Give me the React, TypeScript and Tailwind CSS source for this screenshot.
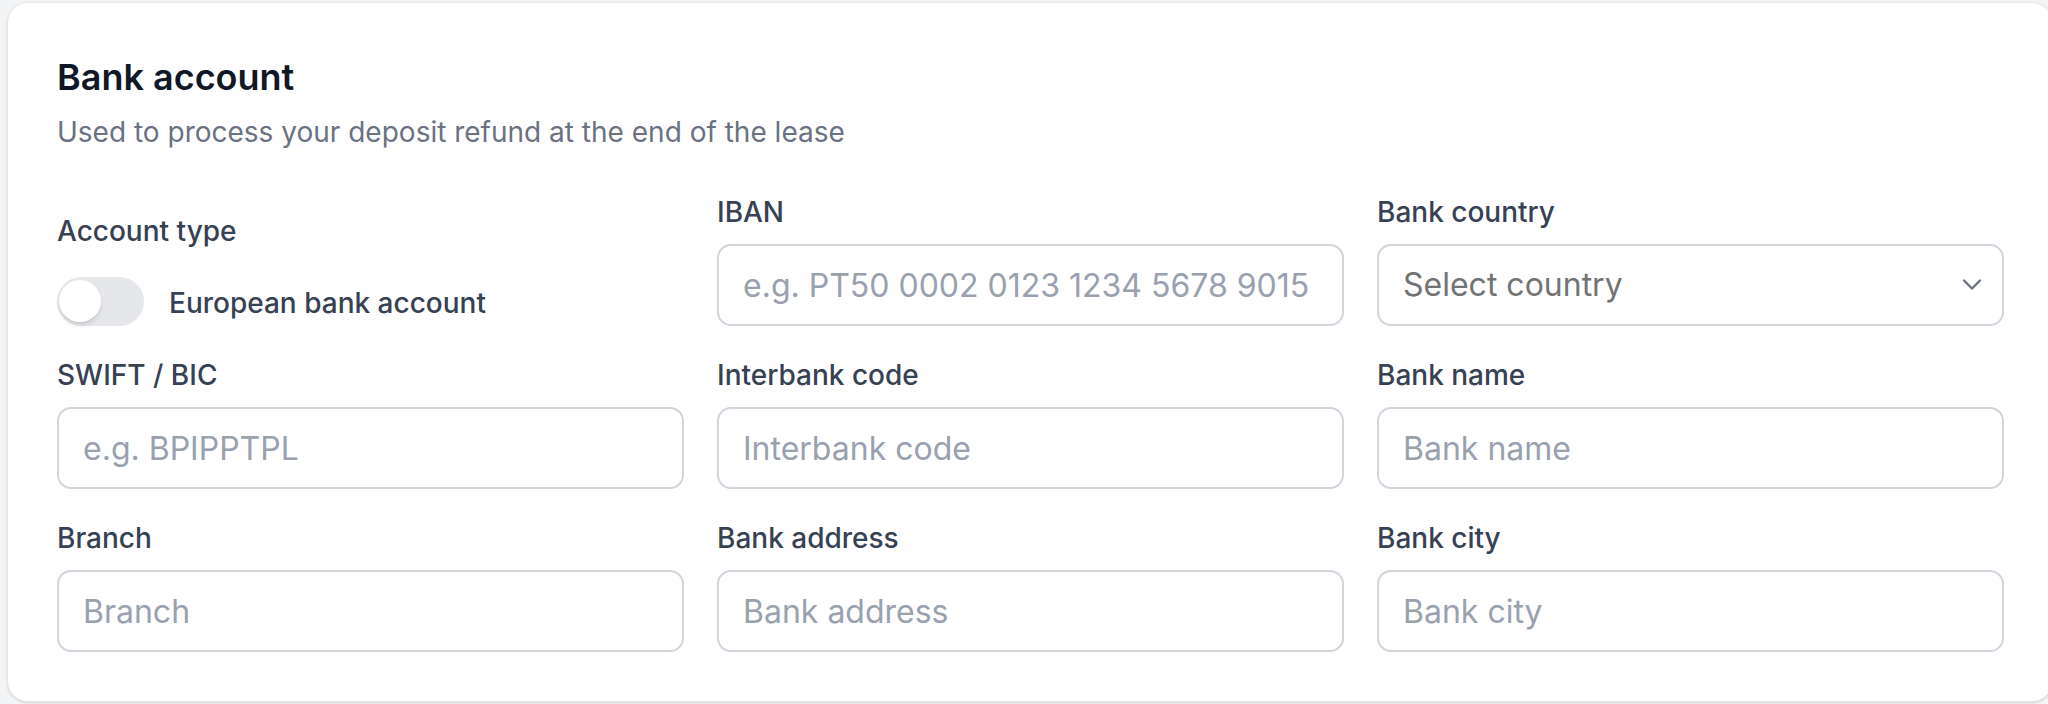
import React from 'react';

type Field = { label: string; placeholder: string };

const rowTwo: Field[] = [
  { label: 'SWIFT / BIC', placeholder: 'e.g. BPIPPTPL' },
  { label: 'Interbank code', placeholder: 'Interbank code' },
  { label: 'Bank name', placeholder: 'Bank name' },
];

const rowThree: Field[] = [
  { label: 'Branch', placeholder: 'Branch' },
  { label: 'Bank address', placeholder: 'Bank address' },
  { label: 'Bank city', placeholder: 'Bank city' },
];

const Label = ({ children }: { children: React.ReactNode }) => (
  <label className="block text-[28px] leading-[35px] font-medium text-gray-700 mb-[14px]">{children}</label>
);

const TextField = ({ label, placeholder }: Field) => (
  <div className="flex flex-col">
    <Label>{label}</Label>
    <input
      type="text"
      placeholder={placeholder}
      className="h-[82px] w-full rounded-[14px] border-2 border-gray-300 bg-white px-[24px] text-[32px] text-gray-900 placeholder:text-gray-400 outline-none"
    />
  </div>
);

export default function App() {
  const [european, setEuropean] = React.useState(false);

  return (
    <div className="h-[704px] w-[2048px] overflow-hidden bg-[#f3f4f6] pl-[7px] pt-[2px] font-[Inter,sans-serif]">
      <div className="w-[2046px] rounded-[21px] border border-gray-200 bg-white pl-[49px] pt-[50px] pb-[49px] shadow-sm">
        {/* Header */}
        <h2 className="text-[36px] leading-[49px] font-semibold text-gray-900">Bank account</h2>
        <p className="mt-[9px] text-[28px] leading-[42px] text-gray-500">
          Used to process your deposit refund at the end of the lease
        </p>

        {/* Form */}
        <div className="mt-[42px] grid w-[1947px] grid-cols-3 gap-x-[33px] gap-y-[32px]">
          <div className="flex flex-col justify-end">
            <span className="block text-[28px] leading-[35px] font-medium text-gray-700">Account type</span>
            <div className="mt-[28px] flex h-[49px] items-center gap-[25px]">
              <button
                type="button"
                onClick={() => setEuropean(!european)}
                className={`relative h-[49px] w-[87px] rounded-full transition-colors ${european ? 'bg-gray-900' : 'bg-gray-200'}`}
              >
                <span
                  className={`absolute top-[3px] h-[42px] w-[42px] rounded-full bg-white shadow-md transition-all ${european ? 'left-[42px]' : 'left-[2px]'}`}
                />
              </button>
              <span className="pt-[4px] text-[28px] leading-[35px] font-medium text-gray-700">European bank account</span>
            </div>
          </div>

          <TextField label="IBAN" placeholder="e.g. PT50 0002 0123 1234 5678 9015 4" />

          <div className="flex flex-col">
            <Label>Bank country</Label>
            <div className="relative">
              <select
                defaultValue=""
                className="h-[82px] w-full appearance-none rounded-[14px] border-2 border-gray-300 bg-white px-[24px] text-[32px] text-[#737373] outline-none"
              >
                <option value="" disabled>
                  Select country
                </option>
                <option value="PT">Portugal</option>
                <option value="ES">Spain</option>
                <option value="FR">France</option>
              </select>
              <svg
                className="pointer-events-none absolute right-[22px] top-[34px]"
                width="20"
                height="13"
                viewBox="0 0 20 13"
                fill="none"
              >
                <path d="M2 2.5l8 8 8-8" stroke="#6b7280" strokeWidth="2.4" strokeLinecap="round" strokeLinejoin="round" />
              </svg>
            </div>
          </div>

          {rowTwo.map((f) => (
            <TextField key={f.label} {...f} />
          ))}
          {rowThree.map((f) => (
            <TextField key={f.label} {...f} />
          ))}
        </div>
      </div>
    </div>
  );
}
